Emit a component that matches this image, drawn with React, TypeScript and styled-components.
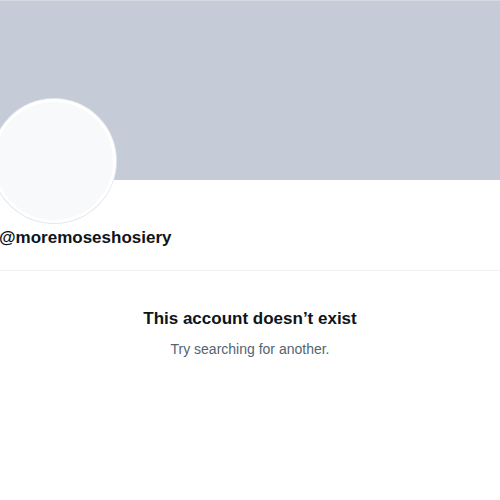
import styled, { createGlobalStyle } from 'styled-components';

const GlobalStyle = createGlobalStyle`
  body {
    margin: 0;
    background: #ffffff;
    font-family: "Liberation Sans", Arial, sans-serif;
    color: #0f1419;
  }
`;

const Page = styled.div`
  width: 500px;
  height: 500px;
  overflow: hidden;
  background: #fff;
`;

const Banner = styled.div`
  height: 179px;
  background: #c5ccd7;
  border-top: 1px solid #d6dae1;
`;

const ProfileHeader = styled.section`
  display: flex;
  flex-direction: column;
  align-items: flex-start;
  border-bottom: 1px solid #eff3f4;
  padding-bottom: 20px;
`;

const Avatar = styled.div`
  box-sizing: border-box;
  width: 124px;
  height: 124px;
  margin-top: -81px;
  margin-left: -8px;
  border-radius: 50%;
  background: #f7f9fb;
  border: 3px solid #ffffff;
  box-shadow: 0 0 0 1px #e3e7ec;
`;

const Username = styled.h1`
  margin: 3px 0 0 -1px;
  font-size: 17px;
  line-height: 24px;
  font-weight: 700;
`;

const EmptyState = styled.div`
  display: flex;
  flex-direction: column;
  align-items: center;
  padding-top: 36px;
  gap: 8px;
`;

const Title = styled.h2`
  margin: 0;
  font-size: 17px;
  line-height: 24px;
  font-weight: 700;
`;

const Hint = styled.p`
  margin: 0;
  font-size: 14px;
  line-height: 20px;
  color: #536471;
`;

export default function App() {
  return (
    <Page>
      <GlobalStyle />
      <Banner />
      <ProfileHeader>
        <Avatar />
        <Username>@moremoseshosiery</Username>
      </ProfileHeader>
      <EmptyState>
        <Title>This account doesn’t exist</Title>
        <Hint>Try searching for another.</Hint>
      </EmptyState>
    </Page>
  );
}
